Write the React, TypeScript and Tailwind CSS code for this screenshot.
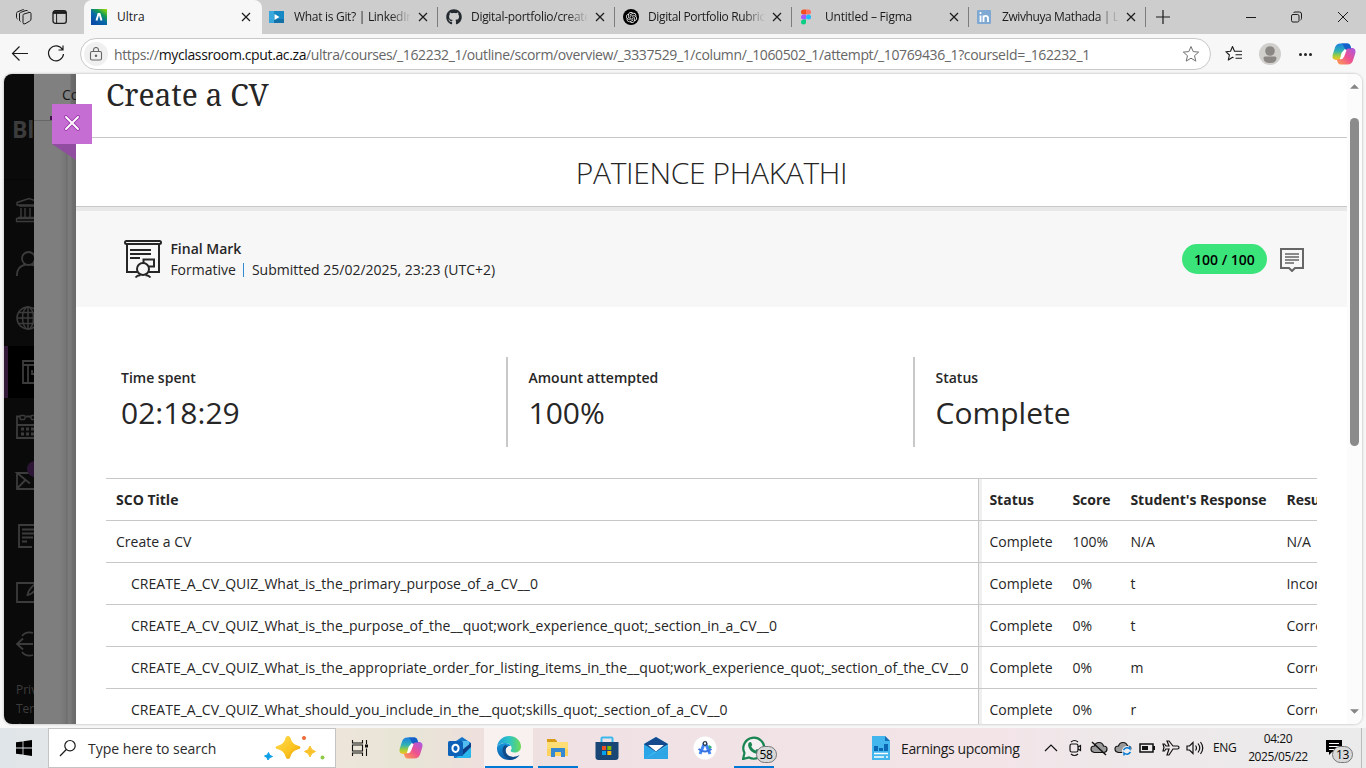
import React from "react";
import { FaGithub } from "react-icons/fa";
import { SiOpenai } from "react-icons/si";

const ui = "font-['Open_Sans','Noto_Sans',sans-serif]";

function Copilot({ id, className }: { id: string; className: string }) {
  return (
    <svg viewBox="0 0 24 24" className={className}>
      <defs>
        <linearGradient id={id + "a"} x1="0" y1="0" x2="0" y2="1">
          <stop offset="0" stopColor="#1b7fe0" />
          <stop offset="0.45" stopColor="#2fb2b6" />
          <stop offset="0.75" stopColor="#a4cf3a" />
          <stop offset="1" stopColor="#fbc02b" />
        </linearGradient>
        <linearGradient id={id + "b"} x1="1" y1="0" x2="0" y2="1">
          <stop offset="0" stopColor="#a55be8" />
          <stop offset="0.5" stopColor="#ee5090" />
          <stop offset="1" stopColor="#ffa24a" />
        </linearGradient>
      </defs>
      <path d="M8.5 1.5h7c1.6 0 2.4 1 2.9 2.4l.8 2.6h-2.5c-1.600 0-2.500.9-3 2.400l-2.200 6.800c-.6 1.700-1.400 2.300-3 2.300H4C1 18 0 15.600.7 12.800L3 5.500C4 2.800 5.600 1.500 8.500 1.500Z" fill={`url(#${id}a)`} />
      <path d="M15.500 22.500h-7c-1.600 0-2.400-1-2.900-2.400L4.800 17.500h2.700c1.600 0 2.400-.9 2.900-2.400l2.200-6.800C13.200 6.600 14 6 15.600 6H20c3 0 4 2.400 3.300 5.200L21 18.500c-1 2.700-2.600 4-5.500 4Z" fill={`url(#${id}b)`} />
      <path d="M8.500 1.500h7c1.600 0 2.400 1 2.900 2.400l.8 2.600h-2.500c-1.500 0-2.400.8-2.900 2.100L12 5c-.6-2-1.500-3.500-3.500-3.500Z" fill="#1560c8" />
      <path d="m9.500 11 3.300-4 1.700 1.200-2.300 6.300-1.800 2.500-2.500.3Z" fill="#fff" />
    </svg>
  );
}

function Close({ className = "" }: { className?: string }) {
  return (
    <svg viewBox="0 0 10 10" className={"h-[10px] w-[10px] shrink-0 " + className}>
      <path d="M1 1l8 8M9 1l-8 8" stroke="#1b1b1b" strokeWidth="1.2" fill="none" />
    </svg>
  );
}

const tabs = [
  {
    title: "What is Git? | LinkedIn",
    tracking: "tracking-[-0.3px]",
    icon: (
      <svg viewBox="0 0 16 16" className="h-4 w-4">
        <path d="M0 2h15v12H0z" fill="#1689c4" />
        <path d="M0 10h15v4H0z" fill="#1271a8" />
        <path d="M0 2h5v12H0z" fill="#38a7dc" />
        <path d="M5.500 5v6l5-3z" fill="#fff" />
      </svg>
    ),
  },
  { title: "Digital-portfolio/create", tracking: "tracking-[-0.3px]", icon: <FaGithub className="h-4 w-4 text-[#24292f]" /> },
  {
    title: "Digital Portfolio Rubric",
    tracking: "tracking-[-0.36px]",
    icon: (
      <span className="flex h-4 w-4 items-center justify-center rounded-full bg-black">
        <SiOpenai className="h-[11px] w-[11px] text-white" />
      </span>
    ),
  },
  {
    title: "Untitled – Figma",
    tracking: "tracking-[-0.22px]",
    icon: (
      <svg viewBox="0 0 16 16" className="h-4 w-4">
        <path d="M6 .5H3.500a2.500 2.500 0 0 0 0 5H6z" fill="#f24e1e" />
        <path d="M6 .5h2.500a2.500 2.500 0 0 1 0 5H6z" fill="#ff7262" />
        <path d="M6 5.500H3.500a2.500 2.500 0 0 0 0 5H6z" fill="#a259ff" />
        <circle cx="8.500" cy="8" r="2.500" fill="#1abcfe" />
        <path d="M6 10.500H3.500a2.500 2.500 0 1 0 2.500 2.500z" fill="#0acf83" />
      </svg>
    ),
  },
  {
    title: "Zwivhuya Mathada | LinkedIn",
    tracking: "tracking-[-0.4px]",
    icon: (
      <svg viewBox="0 0 16 16" className="h-4 w-4">
        <rect x="0" y="1" width="14" height="14" rx="1" fill="#7fa8d3" />
        <path d="M3.500 6.500V13M6.500 13V6.500M6.500 9c0-2.500 4.500-3 4.500.3V13" stroke="#fff" strokeWidth="1.800" fill="none" />
        <circle cx="3.500" cy="4" r="1.100" fill="#fff" />
      </svg>
    ),
  },
];

function TabBar() {
  return (
    <div className="flex h-[34px] items-stretch bg-[#cdcdcd]">
      <div className="flex w-[84px] items-center pl-4">
        <svg viewBox="0 0 16 16" className="h-4 w-4" fill="none" stroke="#1b1b1b" strokeWidth="1">
          <path d="M7.500 5.200 13 3.500q2-.5 2 1V10q0 1.500-1.300 2.100L9 14.800q-2 .8-2-1.300V6.500q0-1 .5-1.300Z" />
          <path d="M4.500 12.500Q3.500 12 3.500 11V5q0-1.200 1-1.600L10 1.500q1.500-.4 2 .8M1.500 10Q.5 9.500.5 8.500v-4q0-1.200 1-1.600L6.500.8q1.200-.4 1.800.4" />
        </svg>
        <svg viewBox="0 0 16 16" className="ml-[20px] h-4 w-4" fill="none" stroke="#1b1b1b" strokeWidth="1.300">
          <rect x="1" y="1.700" width="13.300" height="12.600" rx="2.300" />
          <path d="M1 3.500h13" strokeWidth="2.800" />
          <path d="M4.600 4v10" strokeWidth="1" />
        </svg>
      </div>
      <div className="flex w-[178px] items-center rounded-t-lg bg-[#f7f7f7] pl-[7px] pr-[11px]">
        <svg viewBox="0 0 16 16" className="h-4 w-4 shrink-0">
          <defs>
            <linearGradient id="ultra" x1="1" y1="0" x2="0.250" y2="1">
              <stop offset="0" stopColor="#a3e000" />
              <stop offset="0.350" stopColor="#149a55" />
              <stop offset="0.600" stopColor="#0868a8" />
              <stop offset="1" stopColor="#0a49a8" />
            </linearGradient>
          </defs>
          <rect width="16" height="16" fill="url(#ultra)" />
          <path d="M5.500 11.500 7.400 5h1.200l1.900 6.500" stroke="#fff" strokeWidth="1.900" fill="none" />
        </svg>
        <span className="ml-[10px] flex-1 text-[12px] text-[#1b1b1b]">Ultra</span>
        <Close />
      </div>
      {tabs.map((t) => (
        <div key={t.title} className="flex w-[177px] items-center pl-[7px]">
          <span className="h-4 w-4 shrink-0">{t.icon}</span>
          <span className={"ml-[9px] w-[117px] overflow-hidden whitespace-nowrap text-[12px] text-[#1b1b1b] [mask-image:linear-gradient(to_right,black_96px,transparent_117px)] " + t.tracking}>
            {t.title}
          </span>
          <Close className="ml-[7px]" />
          <span className="ml-auto mr-px h-5 w-px bg-[#7c7c7c]" />
        </div>
      ))}
      <div className="flex flex-1 items-center pl-[9px]">
        <svg viewBox="0 0 14 14" className="h-[14px] w-[14px]"><path d="M7 0v14M0 7h14" stroke="#1b1b1b" strokeWidth="1.200" /></svg>
        <svg viewBox="0 0 116 14" className="ml-[74px] h-[14px] w-[116px]" fill="none" stroke="#1b1b1b" strokeWidth="1">
          <path d="M2 7.500h10" />
          <rect x="47.500" y="4.500" width="7.500" height="7.500" rx="1.500" />
          <path d="M49.500 3q.5-1 1.500-1h4.500q2 0 2 2V8.500q0 1-1 1.500M94 2l10 10M104 2 94 12" />
        </svg>
      </div>
    </div>
  );
}

function Toolbar() {
  return (
    <div className="flex h-10 items-center bg-[#f7f7f7]">
      <svg viewBox="0 0 80 40" className="h-10 w-20 shrink-0" fill="none" stroke="#1b1b1b" strokeWidth="1.200">
        <path d="M28 19.500H12.500M19.500 12.500l-7 7 7 7" />
        <path d="M62.500 15.500A7.500 7.500 0 1 0 63.500 20M63 11.500v4.500h-4.500" />
      </svg>
      <div className="flex h-8 w-[1131px] items-center rounded-full border border-[#c8c8c8] bg-white pl-[3px]">
        <span className="flex h-6 w-6 shrink-0 items-center justify-center rounded-full bg-[#f0f0f0]">
          <svg viewBox="0 0 14 14" className="h-[14px] w-[14px]" fill="none" stroke="#666" strokeWidth="1.100">
            <rect x="1.500" y="4.500" width="11" height="8.500" rx="1.500" />
            <path d="M4.500 4.500V3a2.500 2.500 0 0 1 5 0v1.500" />
            <circle cx="7" cy="8.800" r=".7" fill="#666" />
          </svg>
        </span>
        <span className="ml-[6px] w-[1070px] whitespace-nowrap text-[14px] tracking-[-0.375px] text-[#666]">
          https://<span className="text-[#111]">myclassroom.cput.ac.za</span>/ultra/courses/_162232_1/outline/scorm/overview/_3337529_1/column/_1060502_1/attempt/_10769436_1?courseId=_162232_1
        </span>
        <svg viewBox="0 0 18 18" className="h-[18px] w-[18px] shrink-0 -ml-[2px]" fill="none" stroke="#707070" strokeLinejoin="round">
          <path d="m9 1.500 2.200 5.100 5.500.5-4.200 3.600 1.300 5.400L9 13.200l-4.800 2.900 1.300-5.400L1.300 7.100l5.500-.5z" />
        </svg>
      </div>
      <svg viewBox="0 0 18 18" className="ml-[14px] h-[18px] w-[18px]" fill="none" stroke="#1b1b1b" strokeWidth="1.100" strokeLinejoin="round">
        <path d="M11 6.200H9.500L7.500 1.500l-2 4.700-4.700.5 3.600 3.300-1.100 5L7.600 12.300l.9.500M11 6.200h6M10.500 9.700H17M10.500 13.200H17" />
      </svg>
      <svg viewBox="0 0 22 22" className="ml-[16px] h-[22px] w-[22px]">
        <circle cx="11" cy="11" r="11" fill="#d1cfcc" />
        <circle cx="11" cy="8" r="4.800" fill="#8a8785" />
        <path d="M4.500 15q0-1.500 1.500-1.500h10q1.500 0 1.500 1.500 0 5-6.500 5t-6.500-5Z" fill="#8a8785" />
      </svg>
      <span className="ml-[18px] flex gap-[2px]">
        <i className="h-[3px] w-[3px] rounded-full bg-[#222]" />
        <i className="h-[3px] w-[3px] rounded-full bg-[#222]" />
        <i className="h-[3px] w-[3px] rounded-full bg-[#222]" />
      </span>
      <Copilot id="ct" className="ml-[20px] h-6 w-6" />
    </div>
  );
}

function SideIcons() {
  return (
    <svg viewBox="0 0 30 650" className="h-[650px] w-[30px]" fill="none" stroke="#3c3c3c" strokeWidth="1.800">
      <path d="M0 105.500h30" stroke="#050505" strokeWidth="1" />
      <g>
        <path d="M13 128.500 25 124.500l12 4v2.500H13zM15 132h20M17 134v9M21 134v9M26 134v9M31 134v9M14 143.500h22M12.500 147.500h26v-3h-26z" strokeWidth="1.400" />
        <circle cx="24.500" cy="184.500" r="6.500" />
        <path d="M12.800 202q0-10 9-11.500M27 190.500q9 1.500 9 11.500" />
        <circle cx="24" cy="244" r="11" strokeWidth="1.500" />
        <ellipse cx="24" cy="244" rx="5.500" ry="11" strokeWidth="1.500" />
        <path d="M13 244h22M24 233v22M15 238.500h18M15 249.500h18" strokeWidth="1.500" />
      </g>
      <rect x="0" y="272" width="30" height="52" fill="#000" stroke="none" />
      <rect x="0" y="272" width="4" height="52" fill="#331a38" stroke="none" />
      <path d="M19 287h20v22H19zM19 291h20M24 291v18M28 296v4h12" />
      <path d="M13 345v19h25v-19M13 348.500v-6h3M13 351h24M22 342.500h5" />
      <rect x="16" y="341.500" width="5" height="4" rx="1" strokeWidth="1.400" />
      <rect x="27" y="341.500" width="5" height="4" rx="1" strokeWidth="1.400" />
      <path d="M17 355h3M22 355h3M27 355h3M17 360h3M22 360h3M27 360h3" strokeWidth="3" />
      <path d="M13 399v16h26v-16H13l13 10.500M13 414.500l8-8" />
      <circle cx="31" cy="395" r="8" fill="#2d1635" stroke="none" />
      <path d="M28 473H15v-22h20M18 455.500h12M18 459.500h12M18 463.500h11M18 467.500h5" />
      <path d="M34 509H13v19h22v-6M31 510q-7 6-7.500 11 6-1 10-8" />
      <path d="M13 570h16M19 564.500l-6 5.500 6 5.500M18 562q4-5 11-3M18 578q4 5 11 3" />
    </svg>
  );
}

function Backdrop() {
  return (
    <>
      <div className="relative w-[30px] shrink-0 overflow-hidden bg-[#0a0a0a]">
        <SideIcons />
        <span className="absolute left-[8px] top-[42px] text-[23px] font-bold leading-[26px] tracking-[-0.3px] text-[#3c3c3c]">Blackboard</span>
        <div className="absolute left-3 top-[606px] whitespace-nowrap text-[12px] leading-[19px] text-[#3c3c3c]">
          Privacy<br />Terms<br />Accessibility
        </div>
      </div>
      <div className="flex w-[42px] shrink-0 flex-col bg-[#7e7e7e]">
        <div className="h-[47px] overflow-hidden border-b border-[#676767] bg-[linear-gradient(to_right,#808080_36px,#6c6c6c_37px,#666666)] pl-[28px] pt-[10px] text-[14px] leading-[22px] text-[#191919]">Content</div>
        <div className="flex-1 bg-[linear-gradient(to_right,#7e7e7e_26px,#757575_32px,#6a6a6a_33px,#7b7b7b_34px,#7a7a7a_37px,#707070_38px,#696969)]" />
      </div>
      <div className="absolute left-[46px] top-[42px] h-[4px] w-4 bg-[#42124a]" />
      <div className="absolute left-[48px] top-[30px] z-10 flex h-10 w-10 items-center justify-center bg-[#c66dd4] pb-[2px]">
        <svg viewBox="0 0 18 18" className="h-[18px] w-[18px]" fill="none">
          <path d="m3 3 12 12M15 3 3 15" stroke="#9a35aa" strokeWidth="3.800" strokeLinecap="round" />
          <path d="m3 3 12 12M15 3 3 15" stroke="#fff" strokeWidth="1.900" strokeLinecap="round" />
        </svg>
      </div>
      <svg viewBox="0 0 24 16" className="absolute left-[48px] top-[70px] h-4 w-6"><path d="M0 0h24v16z" fill="#914d9f" /></svg>
    </>
  );
}

const stats = [
  ["Time spent", "02:18:29"],
  ["Amount attempted", "100%"],
  ["Status", "Complete"],
];

const rows = [
  ["Create a CV", "Complete", "100%", "N/A", "N/A"],
  ["CREATE_A_CV_QUIZ_What_is_the_primary_purpose_of_a_CV__0", "Complete", "0%", "t", "Incorrect"],
  ["CREATE_A_CV_QUIZ_What_is_the_purpose_of_the__quot;work_experience_quot;_section_in_a_CV__0", "Complete", "0%", "t", "Correct"],
  ["CREATE_A_CV_QUIZ_What_is_the_appropriate_order_for_listing_items_in_the__quot;work_experience_quot;_section_of_the_CV__0", "Complete", "0%", "m", "Correct"],
  ["CREATE_A_CV_QUIZ_What_should_you_include_in_the__quot;skills_quot;_section_of_a_CV__0", "Complete", "0%", "r", "Correct"],
];

function Row({ cells, head, index }: { cells: string[]; head?: boolean; index: number }) {
  return (
    <div className={"flex h-[42px] shrink-0 border-t border-[#c8c8c8] whitespace-nowrap text-[14px] leading-[42px] " + (head ? "font-bold" : "tracking-[0.016px]")}>
      <div className={"w-[873px] shrink-0 border-r border-[#c8c8c8] " + (index > 0 ? "pl-[25px]" : "pl-[10px]")}>{cells[0]}</div>
      <div className="w-[3px] shrink-0 bg-[#f0f0f0]" />
      <div className="w-[83px] shrink-0 pl-[7.4px]">{cells[1]}</div>
      <div className="w-[58px] shrink-0 pl-[7.4px]">{cells[2]}</div>
      <div className="w-[156px] shrink-0 pl-[7.4px]">{cells[3]}</div>
      <div className="shrink-0 pl-[7.4px]">{cells[4]}</div>
    </div>
  );
}

function Panel() {
  return (
    <div className="flex w-[1271px] shrink-0 flex-col bg-white text-[#262626]">
      <div className="h-16 shrink-0 border-b border-[#c8c8c8] pl-[30px]">
        <h1 className="whitespace-nowrap font-['Noto_Serif','DejaVu_Serif',serif] text-[30px] leading-[41px] tracking-[-0.05px]">Create a CV</h1>
      </div>
      <div className="flex h-[69px] shrink-0 items-center justify-center border-b border-[#c8c8c8] pt-[1px] text-[30px] font-light tracking-[-0.36px]">PATIENCE PHAKATHI</div>
      <div className="flex h-[100px] shrink-0 items-center border-t-4 border-[#e8e8e8] bg-[#f7f7f7] pl-[48px] pr-[43px]">
        <svg viewBox="0 0 38 40" className="h-10 w-[38px]" fill="none" stroke="#262626" strokeWidth="2">
          <rect x="1" y="2" width="36" height="3" rx="1.500" />
          <path d="M3 5v28h10M25 33h10V5M6 11h21M6 15h21M6 19h10M19.500 24v-3.500h10.500v7h-5" />
          <circle cx="19" cy="30" r="6" fill="#f7f7f7" />
          <path d="M11.500 38.500q2-2.500 5-2.200M21.500 36.300q3-.3 5 2.200" />
        </svg>
        <div className="ml-[8.4px] flex flex-col whitespace-nowrap text-[14px] leading-[21px]">
          <span className="font-semibold">Final Mark</span>
          <span className="flex items-center">Formative<i className="ml-[7px] mr-[7.5px] h-[14px] w-[1.5px] bg-[#328bd0]" />Submitted 25/02/2025, 23:23 (UTC+2)</span>
        </div>
        <span className="ml-auto flex h-[30px] w-[85px] items-center justify-center rounded-full bg-[#3ae47a] text-[14px] font-semibold text-black">100 / 100</span>
        <svg viewBox="0 0 24 24" className="ml-[13px] mt-[2px] h-6 w-6" fill="none" stroke="#666" strokeWidth="2">
          <path d="M1 1h22v19h-8l-3 3-3-3H1z" />
          <path d="M5 6h14M5 9h14M5 12h14M5 15h9" strokeWidth="1.600" />
        </svg>
      </div>
      <div className="mt-[50px] flex h-[90px] shrink-0 pl-6">
        {stats.map(([label, value], i) => (
          <div key={label} className={"flex w-[407px] flex-col pt-[11px] " + (i > 0 ? "border-l-2 border-[#c8c8c8] pl-[20.500px]" : "pl-[21px] mr-[-1px]")}>
            <span className="text-[14px] font-semibold leading-5">{label}</span>
            <span className="mt-[5px] text-[30px] leading-10">{value}</span>
          </div>
        ))}
      </div>
      <div className="ml-[30px] mt-[31px] flex w-[1211px] flex-1 flex-col overflow-hidden">
        <Row head index={0} cells={["SCO Title", "Status", "Score", "Student's Response", "Result"]} />
        {rows.map((r, i) => <Row key={r[0]} cells={r} index={i} />)}
      </div>
    </div>
  );
}

function Page() {
  return (
    <div className="relative mx-1 flex h-[650px] overflow-hidden rounded-lg bg-white shadow-[0_0_2px_1px_#d4d4d4]">
      <Backdrop />
      <Panel />
      <div className="flex w-[15px] flex-col items-center bg-[#fcfcfc] pt-[10px]">
        <svg viewBox="0 0 10 5" className="h-[5px] w-[9px]"><path d="M0 5 5 0l5 5z" fill="#858585" /></svg>
        <div className="mt-[29px] h-[328px] w-[9px] rounded-full bg-[#8b8b8b]" />
        <svg viewBox="0 0 10 5" className="mt-[263px] h-[5px] w-[9px]"><path d="m0 0 5 5 5-5z" fill="#858585" /></svg>
      </div>
    </div>
  );
}

function AppButton({ children, open, active }: { children: React.ReactNode; open?: boolean; active?: boolean }) {
  return (
    <div className={"flex h-10 w-[49px] shrink-0 flex-col items-center " + (active ? "bg-[#f8f1ef]" : "")}>
      <div className="flex h-[38px] items-center pt-[2px]">{children}</div>
      {(open || active) && <div className={"h-[2px] bg-[#0078d4] " + (active ? "w-[48px]" : "w-10")} />}
    </div>
  );
}

function Badge({ children }: { children: React.ReactNode }) {
  return (
    <span className="absolute left-[14px] top-[10px] flex h-[17px] w-[21px] items-center justify-center rounded-full border border-[#777] bg-[#d9d9d9] text-[12px] leading-none tracking-[-0.4px] text-black">
      {children}
    </span>
  );
}

function TrayIcon({ children }: { children: React.ReactNode }) {
  return (
    <svg viewBox="0 0 18 18" className="mx-[3px] h-[18px] w-[18px] shrink-0" fill="none" stroke="#111" strokeWidth="1.200">{children}</svg>
  );
}

function Taskbar() {
  return (
    <div className="flex h-10 items-center bg-[linear-gradient(to_right,#dfe5e9_0px,#e4e6e7_60px,#ede5da_340px,#e7e5d6_405px,#eee0dc_475px,#f0e1e5_600px,#f3e4e8_1000px,#eee8e9_1095px,#ebebeb_1366px)]">
      <div className="flex w-12 justify-center">
        <svg viewBox="0 0 16 16" className="h-4 w-4"><path d="M0 2.300 6.600 1.400v6.200H0zM7.400 1.300 16 0v7.600H7.400zM0 8.400h6.600v6.200L0 13.700zM7.400 8.400H16V16l-8.600-1.200z" fill="#000" /></svg>
      </div>
      <div className="flex h-10 w-[288px] items-center border border-[#c4c4c4] bg-white pl-[10px]">
        <svg viewBox="0 0 18 18" className="h-[18px] w-[18px]" fill="none" stroke="#1b1b1b" strokeWidth="1.200"><circle cx="11" cy="6.700" r="5.200" /><path d="M7.300 10.500 1 17" /></svg>
        <span className="ml-[11px] whitespace-nowrap text-[14px] tracking-[-0.03px] text-[#2b2b2b]">Type here to search</span>
        <svg viewBox="0 0 62 28" className="ml-auto mr-[9px] h-7 w-[62px]">
          <defs><linearGradient id="gold" x1="0" y1="0" x2="1" y2="1"><stop offset="0" stopColor="#ffdc55" /><stop offset=".6" stopColor="#fbc31e" /><stop offset="1" stopColor="#dd980e" /></linearGradient></defs>
          <path d="M24 2q2 0 2.500 2 1.500 6 7 7.500 3 .5 3 2t-3 2q-5.500 1.500-7 7-.5 2.500-2.500 2.500t-2.500-2.500q-1.500-5.500-7-7-3-.5-3-2t3-2q5.500-1.500 7-7.500.5-2 2.500-2Z" fill="url(#gold)" />
          <path d="M46 12q1 4.500 5.500 5.500Q47 18.500 46 23q-1-4.500-5.500-5.500Q45 16.500 46 12Z" fill="#f9c22a" stroke="#f9c22a" />
          <path d="M4.500 18.500q.5 3.500 4 4-3.500.5-4.500 3.500-.5-3-3.500-4 3.500-.5 4-3.500Z" fill="#0d9fe8" stroke="#0d9fe8" />
          <circle cx="40" cy="4" r="2" fill="#ef6834" /><circle cx="58.500" cy="23.500" r="2" fill="#91c946" />
        </svg>
      </div>
      <div className="ml-px flex">
        <AppButton>
          <svg viewBox="0 0 18 16" className="mr-[3px] h-4 w-[18px]" fill="none" stroke="#111" strokeWidth="1.100"><path d="M1.500 0v3h10V0M1.500 16v-3h10v3M1.500 5h10v6h-10zM15.500 0v4M15.500 8.500V16" /><path d="M14 4.500h3v3h-3z" fill="#111" stroke="none" /></svg>
        </AppButton>
        <AppButton><Copilot id="cb" className="h-6 w-6" /></AppButton>
        <AppButton>
          <svg viewBox="0 0 24 24" className="h-6 w-6"><path d="M5 7 14 1l9 6v13q0 2-2 2H6Z" fill="#1476c8" /><path d="M8 5h13v9H8z" fill="#52bdf0" /><path d="m8 22 15-13v11q0 2-2 2Z" fill="#29b7ed" /><path d="m14 14 9-7v4l-9 9Z" fill="#103e86" /><rect y="5" width="15" height="15" rx="1.500" fill="#0d62b8" /><ellipse cx="7.500" cy="12.300" rx="3.100" ry="3.600" fill="none" stroke="#fff" strokeWidth="2" /></svg>
        </AppButton>
        <AppButton active>
          <svg viewBox="0 0 24 24" className="h-6 w-6">
            <defs><linearGradient id="edgeg"><stop offset="0" stopColor="#229bdb" /><stop offset=".5" stopColor="#2bc4c7" /><stop offset="1" stopColor="#6edb55" /></linearGradient><linearGradient id="edgeb" x1="0" y1="0" x2="0" y2="1"><stop offset="0" stopColor="#1696dd" /><stop offset="1" stopColor="#0c59a4" /></linearGradient></defs>
            <path d="M0 11C1 4 6 0 12 0c7 0 12 5 12 10.500 0 4-3 6-6.500 6-3 0-4.500-1.200-3.500-2.500 2-3-1-7-5.500-7C4 7 1 9 0 11Z" fill="url(#edgeg)" />
            <path d="M0 11c2-3 5-4 8.500-4 2.500 0 4.500 1.500 5.300 3-2.800-.5-5.300 1.500-5.300 4.500 0 4 4 6.500 7.500 6.500 3 0 5-1 6.500-2-2 3-5.500 5-10 5C4.500 24-.5 18 0 11Z" fill="url(#edgeb)" />
            <path d="M7.500 9.500C5.500 11.500 5 14 6 17c1.500 4.500 5 6.500 8 6.700 3.500-.7 6.500-2.200 8.500-4.700-1.500 1-3.500 2-6.500 2-4 0-7.500-3-7.500-6.500 0-2 1-3.500 2.500-4.300Q9 9 7.500 9.500Z" fill="#114a89" />
          </svg>
        </AppButton>
        <AppButton open>
          <svg viewBox="0 0 24 24" className="h-6 w-6"><path d="M1 3h8l2 2v4H1z" fill="#d79b16" /><path d="M1 6h21v14H1z" fill="#fed25c" /><path d="M1 6h21v7H1z" fill="#ffdd75" /><path d="M5 12h14v9h-4v-5H9v5H5z" fill="#3688d1" /></svg>
        </AppButton>
        <AppButton>
          <svg viewBox="0 0 24 24" className="h-6 w-6"><path d="M6.500 6V2.500q0-1 1-1h9q1 0 1 1V6" fill="none" stroke="#3bb9ec" strokeWidth="2" /><path d="M.5 6h23v15q0 3-3 3h-17q-3 0-3-3Z" fill="#194674" /><path d="M7 10h4v4H7z" fill="#f25022" /><path d="M12.300 10h4v4h-4z" fill="#7fba00" /><path d="M7 15h4v4H7z" fill="#00a4ef" /><path d="M12.300 15h4v4h-4z" fill="#ffb900" /></svg>
        </AppButton>
        <AppButton>
          <svg viewBox="0 0 24 24" className="h-6 w-6"><path d="M0 8 12 1l12 7v15H0z" fill="#40bcf1" /><path d="M0 8v15l11-7.500z" fill="#2aa5e8" /><path d="M0 23 24 10v13z" fill="#1b90dc" opacity=".5" /><path d="M0 8 12 1l12 7-2 1.500H2z" fill="#144a8d" /><path d="M3 9h18l-9 6.500z" fill="#fff" /><path d="M0 8h3l9 7.500L21 8h3L12 16z" fill="#144a8d" /></svg>
        </AppButton>
        <AppButton>
          <svg viewBox="0 0 24 24" className="h-6 w-6"><circle cx="12" cy="12" r="11.500" fill="#fff" /><path d="M14 13h3l2-2-3-2z" fill="#35b36b" /><path d="M11.500 7 7 18M12.500 7 17 18" stroke="#4285f4" strokeWidth="3" /><path d="M5.500 13q6.500 5 13 0" stroke="#3973df" strokeWidth="1.800" fill="none" /><circle cx="12" cy="7.500" r="1.800" fill="#fff" stroke="#26384a" strokeWidth="1.300" /></svg>
        </AppButton>
        <AppButton open>
          <span className="relative flex h-6 w-6">
            <svg viewBox="0 0 24 24" className="h-6 w-6"><path d="m1 23 1.500-6A10.500 10.500 0 1 1 7 21.500Z" fill="#f4f1f2" stroke="#188552" strokeWidth="2.200" /><path d="M7 6.500q2-1 2.500.5l.7 2-1 1.500q1.500 3 4.300 4l1.300-1.500 3 1.500q.5 3-3 3.300C9 17.500 4 9.500 7 6.500Z" fill="#188552" /></svg>
            <Badge>58</Badge>
          </span>
        </AppButton>
      </div>
      <div className="ml-[94px] flex flex-1 items-center">
        <svg viewBox="0 0 18 24" className="h-6 w-[18px] shrink-0"><path d="M0 0h13l5 5v19H0z" fill="#42b6ed" /><path d="M13 0v5h5z" fill="#1570b8" /><path d="M2 10h4v5H2zM7 12h4v3H7zM12 8h4v7h-4z" fill="#0c68b4" /><path d="M2 17.500h14M2 21h10M14 21h2" stroke="#fff" strokeWidth="1.300" /></svg>
        <span className="ml-[11px] w-[129px] shrink-0 whitespace-nowrap text-[14px] tracking-[-0.37px] text-[#1b1b1b]">Earnings upcoming</span>
        <span className="flex w-[177px] shrink-0 items-center pl-[9px]">
          <TrayIcon><path d="m3 12 6-6 6 6" /></TrayIcon>
          <TrayIcon><rect x="4" y="5" width="8" height="8" rx="1.800" /><path d="m12 8 2.500-1.500v5L12 10M5 3q3.500-3 7 0M5 15q3.500 3 7 0" /></TrayIcon>
          <TrayIcon><path d="M4.500 13.500Q1 13 1 10t3.500-3q1-3.500 4.500-3.500t4.500 3.500q3.500 0 3.500 3t-3 3.500Z" fill="#999" /><path d="m2 3 14 13" strokeWidth="1.500" /></TrayIcon>
          <TrayIcon><path d="M4.500 13.500Q1 13 1 10t3.500-3q1-3.500 4.500-3.500t4.500 3.500q3.500 0 3.500 3t-3 3.500Z" fill="#999" /><circle cx="13" cy="12" r="5" fill="#eee" stroke="none" /><path d="M9.500 11q3-4 6.500-1V7.500M16.500 13q-3 4-6.500 1v2.500" stroke="#0879d2" strokeWidth="1.500" /></TrayIcon>
          <TrayIcon><path d="M2 5h13v8H2z" strokeWidth="1.500" /><path d="M4 7h6v4H4zM15 7h2v4h-2z" fill="#111" stroke="none" /></TrayIcon>
          <TrayIcon><path d="m7 7-2-5h2l4 5h4.500q1.500 0 1.500 1.500T15.500 10H11l-4 6H5l2-6H4l-1.500 2H1l1-3.500L1 5h1.500L4 7Z" /></TrayIcon>
          <TrayIcon><path d="M1 7h2.500L7 3.500v11L3.500 11H1zM9.500 6.500q2 2.500 0 5M12 4.500q3.500 4.500 0 9M14.500 3q4.500 6 0 12" /></TrayIcon>
        </span>
        <span className="ml-[6px] w-[30px] shrink-0 text-[12px] tracking-[-0.3px] text-[#111]">ENG</span>
        <span className="flex w-[70px] shrink-0 flex-col items-center whitespace-nowrap text-[12px] leading-[18px] tracking-[-0.4px] text-[#111]"><span>04:20</span><span>2025/05/22</span></span>
        <span className="relative ml-[12px] mt-[2px] h-6 w-5 shrink-0">
          <svg viewBox="0 0 18 18" className="mt-[2px] h-[18px] w-[18px]"><path d="M1 1h16v12H7l-3 3v-3H1z" fill="#000" /><path d="M4 4.500h10M4 7.500h10M4 10.500h7" stroke="#fff" strokeWidth="1" /></svg>
          <span className="absolute -left-[7px] -top-px"><Badge>13</Badge></span>
        </span>
      </div>
      <span className="h-10 w-[5px] border-l border-[#bcbcbc]" />
    </div>
  );
}

export default function App() {
  return (
    <div className={"flex h-[768px] w-[1366px] flex-col overflow-hidden bg-[#f7f7f7] " + ui}>
      <TabBar />
      <Toolbar />
      <Page />
      <div className="mt-1"><Taskbar /></div>
    </div>
  );
}
